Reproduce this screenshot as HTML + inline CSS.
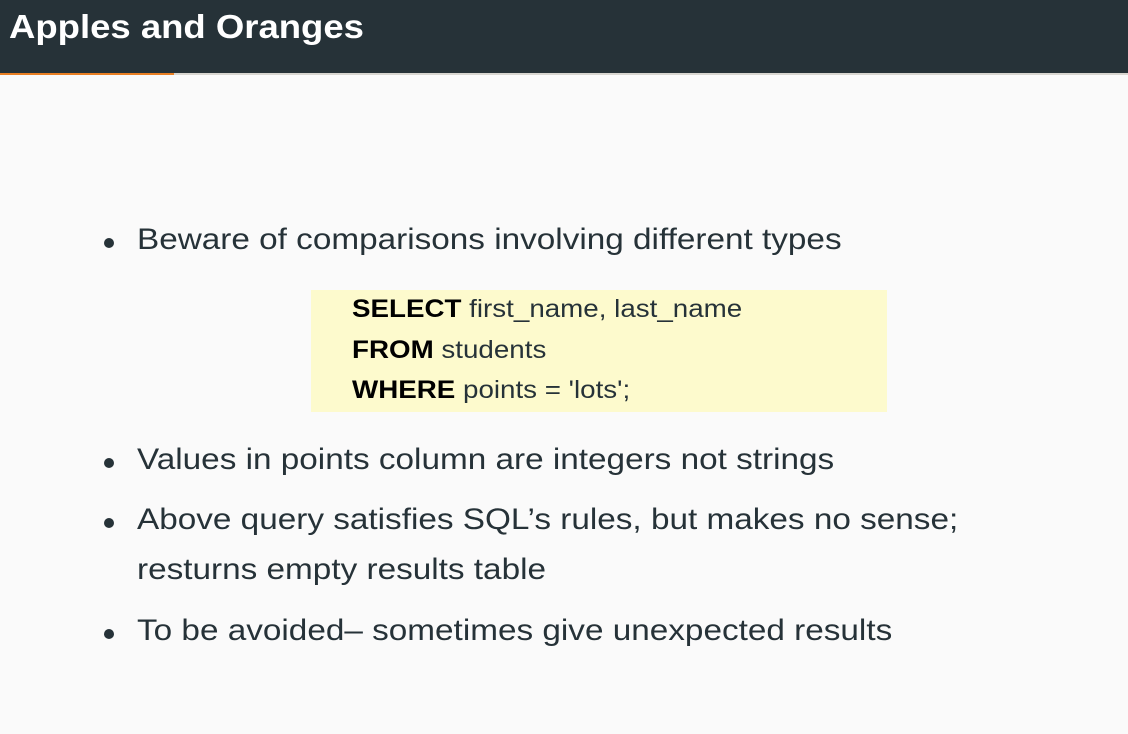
<!DOCTYPE html>
<html><head><style>
html,body{margin:0;padding:0;width:1128px;height:734px;overflow:hidden;background:#fafafa;font-family:"Liberation Sans",sans-serif;color:#263238}
.hd{position:absolute;left:0;top:0;width:1128px;height:73px;background:#263238}
.hd h1{margin:0;position:absolute;left:9px;top:8px;font-size:33px;font-weight:bold;color:#fff;white-space:nowrap;transform:scaleX(1.106);transform-origin:0 0}
.ln{position:absolute;top:73px;height:2px;}
.t{position:absolute;font-size:30px;white-space:nowrap;line-height:1;transform:scaleX(1.11);transform-origin:0 0}
.b{position:absolute;width:10px;height:10px;border-radius:50%;background:#263238}
.box{position:absolute;left:311px;top:290px;width:576px;height:122px;background:#fdfacd}
.c{position:absolute;left:352px;font-size:25px;white-space:nowrap;line-height:1;transform:scaleX(1.11);transform-origin:0 0}
.c b{color:#000}
</style></head><body>
<div class="hd"><h1>Apples and Oranges</h1></div>
<div class="ln" style="left:0;width:174px;background:#e97f23"></div>
<div class="ln" style="left:174px;width:954px;background:#d8d6d0"></div>

<div class="b" style="left:104px;top:238px"></div>
<div class="t" style="left:137px;top:225px">Beware of comparisons involving different types</div>

<div class="box"></div>
<div class="c" style="top:297px"><b>SELECT</b> first_name, last_name</div>
<div class="c" style="top:338px"><b>FROM</b> students</div>
<div class="c" style="top:378px"><b>WHERE</b> points = 'lots';</div>

<div class="b" style="left:104px;top:458px"></div>
<div class="t" style="left:137px;top:445px">Values in points column are integers not strings</div>
<div class="b" style="left:104px;top:518px"></div>
<div class="t" style="left:137px;top:505px">Above query satisfies SQL’s rules, but makes no sense;</div>
<div class="t" style="left:137px;top:555px">resturns empty results table</div>
<div class="b" style="left:104px;top:629px"></div>
<div class="t" style="left:137px;top:616px">To be avoided– sometimes give unexpected results</div>
</body></html>
